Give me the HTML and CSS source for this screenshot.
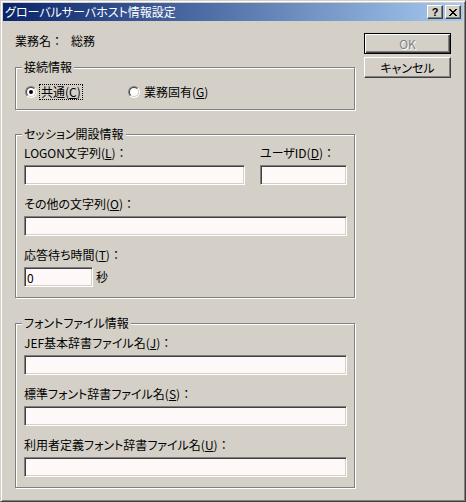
FILE: index.html
```html
<!DOCTYPE html>
<html lang="ja">

<head>
    <meta charset="UTF-8">
    <title>グローバルサーバホスト情報設定</title>
    <link rel="stylesheet" href="styles.css">
</head>

<body>
    <div class="window">
        <div class="titlebar">
            <span class="title">グローバルサーバホスト情報設定</span>
            <button class="cap-btn help">?</button>
            <button class="cap-btn close">
                <svg width="8" height="7" viewBox="0 0 8 7" shape-rendering="crispEdges">
                    <path d="M0 0h2v1h-2z M6 0h2v1h-2z M1 1h2v1h-2z M5 1h2v1h-2z M2 2h4v1h-4z M3 3h2v1h-2z M2 4h4v1h-4z M1 5h2v1h-2z M5 5h2v1h-2z M0 6h2v1h-2z M6 6h2v1h-2z" fill="#000" />
                </svg>
            </button>
        </div>

        <div class="client">
            <div class="main">
                <div class="info">
                    <span>業務名<span class="colon">：</span></span>
                    <span class="info-val">総務</span>
                </div>

                <!-- 接続情報 -->
                <div class="group g-conn">
                    <span class="legend">接続情報</span>
                    <div class="radios">
                        <label class="opt"><span class="radio checked"></span><span class="focus">共通(<u>C</u>)</span></label>
                        <label class="opt"><span class="radio"></span><span>業務固有(<u>G</u>)</span></label>
                    </div>
                </div>

                <!-- セッション開設情報 -->
                <div class="group g-session">
                    <span class="legend">セッション開設情報</span>
                    <div class="field-row">
                        <div class="field logon">
                            <span class="field-label">LOGON文字列(<u>L</u>)<span class="colon">：</span></span>
                            <input class="edit" type="text">
                        </div>
                        <div class="field user">
                            <span class="field-label">ユーザID(<u>D</u>)<span class="colon">：</span></span>
                            <input class="edit" type="text">
                        </div>
                    </div>
                    <div class="field">
                        <span class="field-label">その他の文字列(<u>O</u>)<span class="colon">：</span></span>
                        <input class="edit" type="text">
                    </div>
                    <div class="field">
                        <span class="field-label">応答待ち時間(<u>T</u>)<span class="colon">：</span></span>
                        <div class="with-unit">
                            <input class="edit short" type="text" value="0">
                            <span>秒</span>
                        </div>
                    </div>
                </div>

                <!-- フォントファイル情報 -->
                <div class="group g-font">
                    <span class="legend">フォントファイル情報</span>
                    <div class="field">
                        <span class="field-label">JEF基本辞書ファイル名(<u>J</u>)<span class="colon">：</span></span>
                        <input class="edit" type="text">
                    </div>
                    <div class="field">
                        <span class="field-label">標準フォント辞書ファイル名(<u>S</u>)<span class="colon">：</span></span>
                        <input class="edit" type="text">
                    </div>
                    <div class="field">
                        <span class="field-label">利用者定義フォント辞書ファイル名(<u>U</u>)<span class="colon">：</span></span>
                        <input class="edit" type="text">
                    </div>
                </div>
            </div>

            <div class="side">
                <button class="btn default" disabled>OK</button>
                <button class="btn">キャンセル</button>
            </div>
        </div>
    </div>
</body>

</html>
```

FILE: styles.css
```css
body {
    margin: 0;
    background-color: #d4d0c8;
}

.window {
    width: 466px;
    height: 502px;
    box-sizing: border-box;
    background: #d4d0c8;
    border: 1px solid;
    border-color: #d4d0c8 #404040 #404040 #d4d0c8;
    box-shadow: inset 1px 1px #fff, inset -1px -1px #808080;
    padding: 2px;
    display: flex;
    flex-direction: column;
    font: 12px/14px "Noto Sans CJK JP", sans-serif;
    font-feature-settings: "palt";
    color: #000;
}

/* full-width colon keeps its spacing like the system font */
.colon {
    font-feature-settings: normal;
}

.titlebar {
    height: 18px;
    display: flex;
    align-items: center;
    padding: 0 2px 0 2px;
    background: linear-gradient(to right, #0a246a, #a6caf0);
    color: #fff;
}

.title {
    flex: 1;
    white-space: nowrap;
}

.cap-btn {
    width: 16px;
    height: 14px;
    box-sizing: border-box;
    padding: 0;
    border: 1px solid;
    border-color: #fff #404040 #404040 #fff;
    box-shadow: inset -1px -1px #808080;
    background: #d4d0c8;
    display: flex;
    align-items: center;
    justify-content: center;
}

.help {
    margin-right: 2px;
    font: bold 11px/12px "Liberation Sans", sans-serif;
    color: #000;
}

.client {
    flex: 1;
    display: flex;
    gap: 9px;
    padding: 12px 0 0 12px;
}

.main {
    width: 340px;
}

.info {
    margin-top: 1px;
    height: 14px;
    display: flex;
}

.info-val {
    margin-left: 8px;
}

.group {
    position: relative;
    box-sizing: border-box;
    border: 1px solid #808080;
    box-shadow: inset 1px 1px #fff, 1px 1px #fff;
    padding: 11px 7px 10px 8px;
}

.legend {
    position: absolute;
    top: -8px;
    left: 6px;
    padding: 0 2px;
    background: #d4d0c8;
    white-space: nowrap;
}

.g-conn {
    margin-top: 19px;
    height: 43px;
    padding: 17px 7px 10px 9px;
}

.g-session {
    margin-top: 24px;
}

.g-font {
    margin-top: 25px;
    padding-top: 12px;
}

.radios {
    display: grid;
    grid-template-columns: 103px auto;
}

.opt {
    display: flex;
    align-items: center;
    gap: 4px;
    white-space: nowrap;
}

.focus {
    outline: 1px dotted #000;
    padding: 0 1px;
    margin-left: -1px;
}

.radio {
    position: relative;
    flex: none;
    width: 12px;
    height: 12px;
    box-sizing: border-box;
    border-radius: 50%;
    border: 1px solid;
    border-color: #808080 #fff #fff #808080;
}

.radio::before {
    content: "";
    position: absolute;
    inset: 0;
    border-radius: 50%;
    border: 1px solid;
    border-color: #404040 #d4d0c8 #d4d0c8 #404040;
    background: #fff;
}

.radio.checked::after {
    content: "";
    position: absolute;
    left: 3px;
    top: 3px;
    width: 4px;
    height: 4px;
    border-radius: 50%;
    background: #000;
}

.field {
    margin-bottom: 12px;
}

.group > .field:last-child {
    margin-bottom: 0;
}

.field-row {
    display: flex;
    gap: 15px;
}

.field.logon {
    width: 221px;
}

.field.user {
    width: 87px;
}

.field-label {
    display: block;
    margin-bottom: 5px;
    white-space: nowrap;
}

.edit {
    display: block;
    box-sizing: border-box;
    width: 100%;
    height: 20px;
    margin: 0;
    padding: 0 2px;
    border: 1px solid;
    border-color: #808080 #fff #fff #808080;
    box-shadow: inset 1px 1px #404040, inset -1px -1px #d4d0c8;
    background: #fff8f8;
    font: inherit;
    color: #000;
    outline: none;
}

.with-unit {
    display: flex;
    align-items: center;
    gap: 3px;
}

.edit.short {
    width: 69px;
}

.side {
    display: flex;
    flex-direction: column;
    gap: 3px;
}

.btn {
    width: 87px;
    height: 21px;
    box-sizing: border-box;
    padding: 0;
    border: 1px solid;
    border-color: #fff #404040 #404040 #fff;
    box-shadow: inset -1px -1px #808080, inset 1px 1px #d4d0c8;
    background: #d4d0c8;
    font: inherit;
    color: #000;
}

.btn.default {
    border-color: #000;
    box-shadow: inset 1px 1px #fff, inset -1px -1px #404040, inset -2px -2px #808080;
}

.btn:disabled {
    color: #808080;
    text-shadow: 1px 1px #fff;
}
```
